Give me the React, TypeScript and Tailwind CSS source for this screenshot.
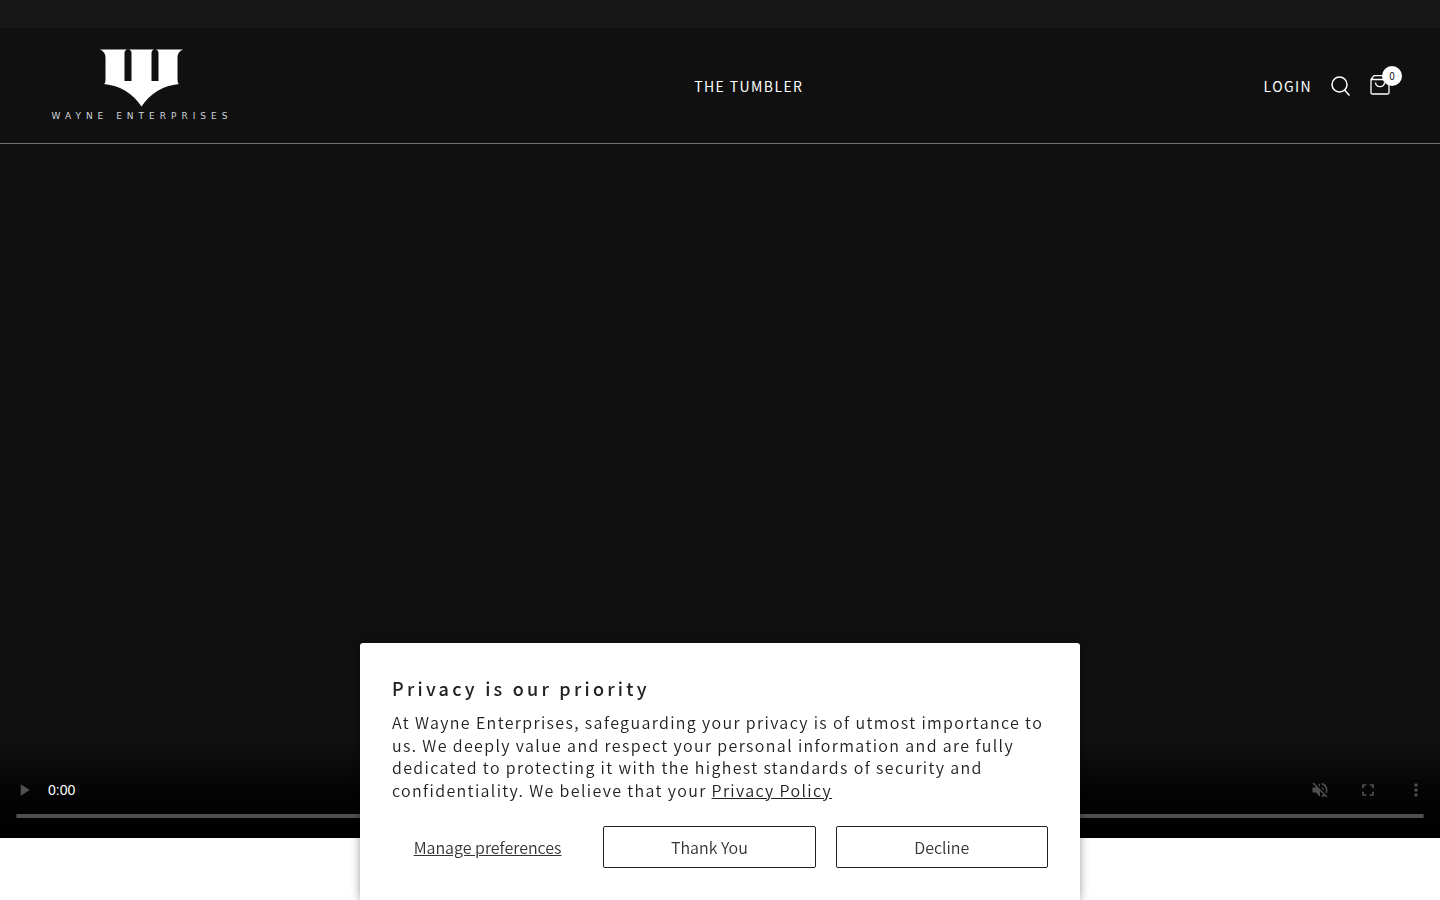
import React, { useState } from "react";
import { MdFullscreen, MdMoreVert, MdPlayArrow, MdVolumeOff } from "react-icons/md";

function Logo() {
  return (
    <a href="/" aria-label="Wayne Enterprises" className="flex w-[184px] flex-col items-center">
      <svg viewBox="0 0 84 58" className="h-[58px] w-[84px]" fill="#fff" aria-hidden="true">
        <path d="M0 .5H27C25 1.500 24.500 2.500 24.500 4V32H31.500V4C31.500 2.500 31 1.500 29 .5H54C52 1.500 51.500 2.500 51.500 4V32H58.500V4C58.500 2.500 58 1.500 56 .5H83C79 2.500 77.500 5 77.500 9V31Q77.500 34 79 35Q55 37.500 41.500 57.500Q28 37.500 4 35Q5.500 34 5.500 31V9C5.500 5 4 2.500 0 .5Z" />
      </svg>
      <span className="mt-[3px] whitespace-nowrap font-['DejaVu_Sans'] text-[9px] leading-3 tracking-[5px] text-gray-300">
        WAYNE ENTERPRISES
      </span>
    </a>
  );
}

function Header() {
  return (
    <header className="absolute inset-x-0 top-0 z-10 border-b border-[#6f6f6f] text-white">
      <div className="flex h-[115px] items-center justify-between px-[50px]">
        <Logo />
        <nav className="flex">
          <a href="/tumbler" className="text-sm tracking-[0.1em]">
            THE TUMBLER
          </a>
        </nav>
        <div className="flex items-center gap-[19px]">
          <a href="/login" className="text-sm tracking-[0.1em]">
            LOGIN
          </a>
          <button type="button" aria-label="Search">
            <svg viewBox="0 0 20 20" className="h-5 w-5" fill="none" stroke="currentColor" strokeWidth="1.5">
              <circle cx="8.500" cy="8.500" r="7.500" />
              <path d="M13.500 14L18.500 19.500" />
            </svg>
          </button>
          <a href="/cart" aria-label="Cart" className="relative">
            <svg viewBox="0 0 20 22" className="h-[22px] w-5" fill="none" stroke="currentColor" strokeWidth="1.300">
              <path d="M1 4.500L4 .7H16L19 4.500V17.500Q19 19 17.500 19H2.500Q1 19 1 17.500ZM1 4.500H19" />
              <path d="M5.500 7.500C6 13 14 13 14.500 7.500" />
            </svg>
            <span className="absolute -top-[9px] -right-3 flex h-5 w-5 items-center justify-center rounded-full bg-white text-[10px] text-[#151515]">
              0
            </span>
          </a>
        </div>
      </div>
    </header>
  );
}

function VideoPlayer() {
  const [position, setPosition] = useState(0);

  return (
    <section className="flex aspect-video w-full flex-col justify-end bg-[#101010]">
      <div className="bg-linear-to-b from-transparent via-black/75 via-50% to-black pt-6 text-[#505050]">
        <div className="flex h-12 items-center">
          <button type="button" aria-label="Play" className="flex w-12 justify-center">
            <MdPlayArrow className="h-5 w-5" />
          </button>
          <span className="flex-1 font-['Liberation_Sans'] text-sm text-white">0:00</span>
          <button type="button" aria-label="Unmute" className="flex w-12 justify-center">
            <MdVolumeOff className="h-5 w-5" />
          </button>
          <button type="button" aria-label="Full screen" className="flex w-12 justify-center">
            <MdFullscreen className="h-5 w-5" />
          </button>
          <button type="button" aria-label="More options" className="flex w-12 justify-center">
            <MdMoreVert className="h-5 w-5" />
          </button>
        </div>
        <div className="flex px-4 pb-5">
          <input
            type="range"
            aria-label="Seek"
            min={0}
            max={100}
            value={position}
            onChange={(e) => setPosition(Number(e.target.value))}
            className="h-1 w-full appearance-none rounded-full bg-[#505050] [&::-webkit-slider-thumb]:w-0 [&::-webkit-slider-thumb]:appearance-none"
          />
        </div>
      </div>
    </section>
  );
}

function PrivacyBanner() {
  const [open, setOpen] = useState(true);

  if (!open) return null;

  return (
    <div
      role="dialog"
      aria-labelledby="privacy-title"
      className="fixed inset-x-0 bottom-0 z-20 mx-auto max-w-[720px] rounded-t-[3px] bg-white p-8 text-[#212121] shadow-[0_0_10px_rgba(0,0,0,0.4)]"
    >
      <h2 id="privacy-title" className="text-lg leading-[26px] font-medium tracking-[0.18em]">
        Privacy is our priority
      </h2>
      <p className="mt-[10px] text-base leading-[1.4] font-[350] tracking-[0.085em]">
        At Wayne Enterprises, safeguarding your privacy is of utmost importance to us. We deeply value and respect your
        personal information and are fully dedicated to protecting it with the highest standards of security and
        confidentiality. We believe that your{" "}
        <a href="/privacy" className="underline">
          Privacy Policy
        </a>
      </p>
      <div className="mt-[25px] grid grid-cols-[9fr_10fr_10fr] gap-5 text-base font-[350] text-[#333]">
        <button type="button" className="h-[42px] underline">
          Manage preferences
        </button>
        <button type="button" onClick={() => setOpen(false)} className="h-[42px] rounded-xs border border-[#212121]">
          Thank You
        </button>
        <button type="button" onClick={() => setOpen(false)} className="h-[42px] rounded-xs border border-[#212121]">
          Decline
        </button>
      </div>
    </div>
  );
}

export default function App() {
  return (
    <div className="min-h-screen bg-white font-['Noto_Sans_CJK_SC',sans-serif]">
      <div className="h-7 bg-[#171717]" />
      <main className="relative">
        <Header />
        <VideoPlayer />
      </main>
      <PrivacyBanner />
    </div>
  );
}
